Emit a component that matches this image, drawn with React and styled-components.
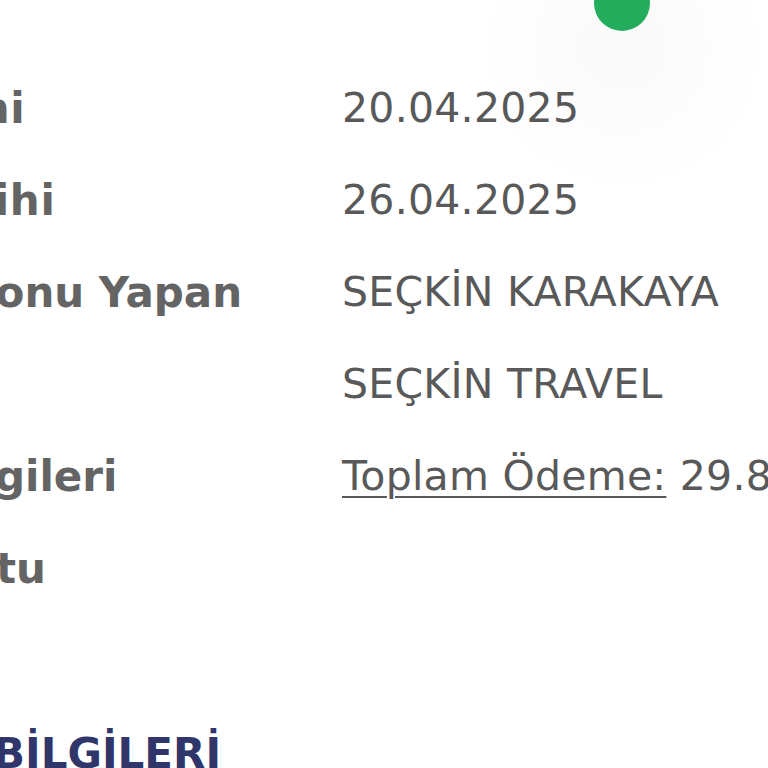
import React from 'react';
import styled, { createGlobalStyle } from 'styled-components';

const GlobalStyle = createGlobalStyle`
    html, body {
        margin: 0;
        padding: 0;
        background: #ffffff;
        overflow: hidden;
    }
    body {
        font-family: 'DejaVu Sans', 'Liberation Sans', sans-serif;
    }
`;

const Page = styled.div`
    position: relative;
    width: 768px;
    height: 768px;
    overflow: hidden;
`;

const Sheet = styled.div`
    margin-left: -247px;
    padding-top: 62px;
`;

const Row = styled.div`
    display: grid;
    grid-template-columns: 589px 1fr;
    align-items: center;
    height: 92px;
    white-space: nowrap;
`;

const Label = styled.div`
    font-size: 42px;
    font-weight: 700;
    letter-spacing: ${props => props.$spread || 0}px;
    color: #646464;
`;

const Value = styled.div`
    font-size: 41px;
    color: #595959;
    letter-spacing: 0.25px;
`;

const Underlined = styled.span`
    text-decoration: underline;
    text-underline-offset: 6px;
    text-decoration-thickness: 2px;
`;

const SectionTitle = styled.h2`
    margin: 116px 0 0 14px;
    font-size: 42px;
    line-height: 48px;
    font-weight: 700;
    color: #30366a;
    white-space: nowrap;
`;

const Dot = styled.div`
    position: absolute;
    top: -25px;
    left: 594px;
    width: 56px;
    height: 56px;
    border-radius: 50%;
    background: #23ad5d;
    box-shadow: 0 45px 130px 35px rgba(0, 0, 0, 0.06);
`;

const rows = [
    { label: 'Gidiş Tarihi', value: '20.04.2025', spread: 0.7 },
    { label: 'Dönüş Tarihi', value: '26.04.2025', spread: 0.7 },
    { label: 'Rezervasyonu Yapan', value: 'SEÇKİN KARAKAYA' },
    { label: 'Acente', value: 'SEÇKİN TRAVEL' },
    { label: 'Ödeme Bilgileri', value: null, total: '29.850,00 TL' },
    { label: 'Acente Notu', value: '' },
];

export default function App() {
    return (
        <Page>
            <GlobalStyle />
            <Sheet>
                {rows.map((row, index) => (
                    <Row key={index}>
                        <Label $spread={row.spread}>{row.label}</Label>
                        <Value>
                            {row.total
                                ? <><Underlined>Toplam Ödeme:</Underlined> {row.total}</>
                                : row.value}
                        </Value>
                    </Row>
                ))}
                <SectionTitle>MÜŞTERİ BİLGİLERİ</SectionTitle>
            </Sheet>
            <Dot />
        </Page>
    );
}
